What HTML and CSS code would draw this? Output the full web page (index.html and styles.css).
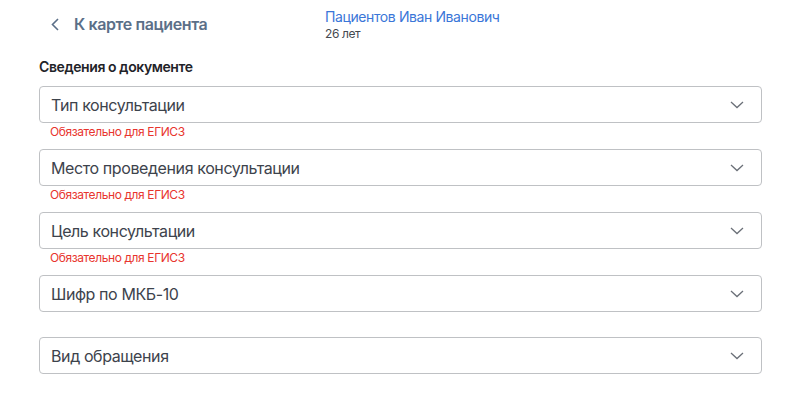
FILE: index.html
```html
<!DOCTYPE html>
<html lang="ru">
<head>
    <meta charset="UTF-8">
    <meta name="viewport" content="width=device-width, initial-scale=1.0">
    <title>Сведения о документе</title>
    <link rel="stylesheet" href="styles.css">
</head>
<body>
    <header class="top-bar">
        <a href="#" class="back-link">
            <svg class="back-icon" width="8" height="13" viewBox="0 0 8 13">
                <path d="M7 1 L1.5 6.5 L7 12" fill="none" stroke="currentColor" stroke-width="1.6"/>
            </svg>
            <span>К карте пациента</span>
        </a>
        <div class="patient">
            <a href="#" class="patient-name">Пациентов Иван Иванович</a>
            <div class="patient-age">26 лет</div>
        </div>
    </header>

    <main class="form">
        <h2 class="form-title">Сведения о документе</h2>

        <div class="field">
            <div class="select">
                <span>Тип консультации</span>
                <svg class="chevron" width="14" height="8" viewBox="0 0 14 8"><path d="M1 1 L7 6.5 L13 1" fill="none" stroke="currentColor" stroke-width="1.3"/></svg>
            </div>
            <div class="hint">Обязательно для ЕГИСЗ</div>
        </div>

        <div class="field">
            <div class="select">
                <span>Место проведения консультации</span>
                <svg class="chevron" width="14" height="8" viewBox="0 0 14 8"><path d="M1 1 L7 6.5 L13 1" fill="none" stroke="currentColor" stroke-width="1.3"/></svg>
            </div>
            <div class="hint">Обязательно для ЕГИСЗ</div>
        </div>

        <div class="field">
            <div class="select">
                <span>Цель консультации</span>
                <svg class="chevron" width="14" height="8" viewBox="0 0 14 8"><path d="M1 1 L7 6.5 L13 1" fill="none" stroke="currentColor" stroke-width="1.3"/></svg>
            </div>
            <div class="hint">Обязательно для ЕГИСЗ</div>
        </div>

        <div class="field">
            <div class="select">
                <span>Шифр по МКБ-10</span>
                <svg class="chevron" width="14" height="8" viewBox="0 0 14 8"><path d="M1 1 L7 6.5 L13 1" fill="none" stroke="currentColor" stroke-width="1.3"/></svg>
            </div>
            <div class="hint hint-empty"></div>
        </div>

        <div class="field">
            <div class="select">
                <span>Вид обращения</span>
                <svg class="chevron" width="14" height="8" viewBox="0 0 14 8"><path d="M1 1 L7 6.5 L13 1" fill="none" stroke="currentColor" stroke-width="1.3"/></svg>
            </div>
        </div>
    </main>
</body>
</html>
```

FILE: styles.css
```css
* {
    margin: 0;
    padding: 0;
    box-sizing: border-box;
}

body {
    font-family: Inter, 'Noto Sans', sans-serif;
    background: #fff;
    color: #2b2f36;
    letter-spacing: -0.025em;
}

/* Top bar with back link and patient info */
.top-bar {
    display: flex;
    align-items: flex-start;
    padding: 8px 0 0 51px;
    height: 58px;
}

.back-link {
    display: flex;
    align-items: center;
    gap: 15px;
    width: 274px;
    margin-top: 6px;
    color: #5b6f88;
    font-size: 16px;
    font-weight: 600;
    text-decoration: none;
}

.back-icon {
    color: #5b6f88;
}

.patient {
    display: flex;
    flex-direction: column;
}

.patient-name {
    color: #3a76d8;
    font-size: 14px;
    line-height: 18px;
    text-decoration: none;
}

.patient-age {
    color: #45494f;
    font-size: 12px;
    line-height: 16px;
}

/* Document form */
.form {
    padding: 0 38px 0 39px;
}

.form-title {
    font-size: 14px;
    font-weight: 600;
    line-height: 18px;
    color: #1f2328;
    margin-bottom: 10px;
}

.field {
    margin-bottom: 1px;
}

.select {
    display: flex;
    align-items: center;
    justify-content: space-between;
    height: 37px;
    padding: 0 17px 0 11px;
    border: 1px solid #bfc1c4;
    border-radius: 4px;
    font-size: 16px;
    color: #3d434c;
}

.chevron {
    color: #6b7078;
}

.hint {
    height: 25px;
    padding: 2px 0 0 11px;
    font-size: 12px;
    line-height: 14px;
    color: #e8342e;
}

.hint-empty {
    height: 24px;
}
```
